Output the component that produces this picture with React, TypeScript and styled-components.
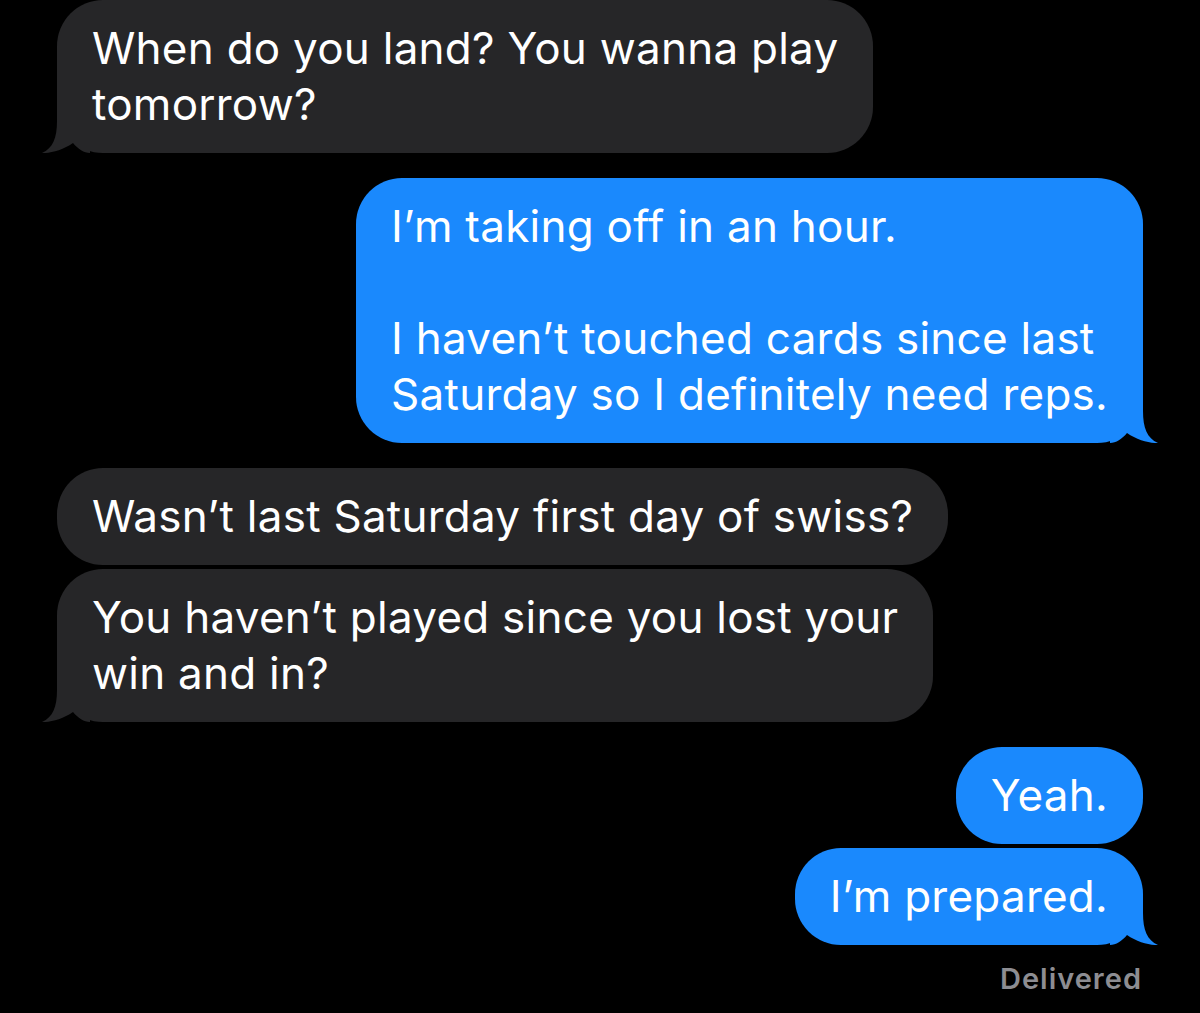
import React from 'react';
import styled, { createGlobalStyle } from 'styled-components';

type Message = {
  id: number;
  text: string;
  tail?: boolean;
};

type Group = {
  id: number;
  mine: boolean;
  messages: Message[];
  status?: string;
};

const groups: Group[] = [
  {
    id: 1,
    mine: false,
    messages: [{ id: 1, text: 'When do you land? You wanna play\ntomorrow?', tail: true }],
  },
  {
    id: 2,
    mine: true,
    messages: [
      {
        id: 2,
        text: 'I’m taking off in an hour.\n\nI haven’t touched cards since last\nSaturday so I definitely need reps.',
        tail: true,
      },
    ],
  },
  {
    id: 3,
    mine: false,
    messages: [
      { id: 3, text: 'Wasn’t last Saturday first day of swiss?' },
      { id: 4, text: 'You haven’t played since you lost your\nwin and in?', tail: true },
    ],
  },
  {
    id: 4,
    mine: true,
    messages: [
      { id: 5, text: 'Yeah.' },
      { id: 6, text: 'I’m prepared.', tail: true },
    ],
    status: 'Delivered',
  },
];

const GlobalStyle = createGlobalStyle`
  html, body {
    margin: 0;
    padding: 0;
    background: #000;
  }
  body {
    font-family: Inter, "Noto Sans", "Liberation Sans", sans-serif;
    -webkit-font-smoothing: antialiased;
  }
`;

const Thread = styled.div`
  display: flex;
  flex-direction: column;
  gap: 25px;
  padding: 0 57px;
  min-height: 1013px;
  box-sizing: border-box;
  background: #000;
`;

const GroupBox = styled.div<{ $mine: boolean }>`
  display: flex;
  flex-direction: column;
  gap: 4px;
  align-items: ${(p) => (p.$mine ? 'flex-end' : 'flex-start')};
`;

const Bubble = styled.div<{ $mine: boolean }>`
  position: relative;
  padding: 20px 35px 21px;
  border-radius: 46px;
  background: ${(p) => (p.$mine ? '#1a89fd' : '#262628')};
  color: #fff;
  font-size: 44px;
  line-height: 56px;
  letter-spacing: 0.25px;
  white-space: pre-line;
  max-width: 920px;
`;

const TailSvg = styled.svg<{ $mine: boolean }>`
  position: absolute;
  bottom: 0;
  width: 48px;
  height: 48px;
  ${(p) => (p.$mine ? 'right: -15px;' : 'left: -15px; transform: scaleX(-1);')}
`;

const Status = styled.div`
  margin-top: 14px;
  margin-right: 1px;
  font-size: 29px;
  line-height: 32px;
  font-weight: 600;
  color: #8d8d92;
  letter-spacing: 1px;
`;

const Tail: React.FC<{ mine: boolean }> = ({ mine }) => (
  <TailSvg $mine={mine} viewBox='0 0 48 48'>
    <path
      d='M0 0 H33 V16 C33 33 37 43 48 48 C40 48.5 27 45 17 38 C12 44 6 48 0 48 Z'
      fill={mine ? '#1a89fd' : '#262628'}
    />
  </TailSvg>
);

export default function App() {
  return (
    <>
      <GlobalStyle />
      <Thread>
        {groups.map((group) => (
          <GroupBox key={group.id} $mine={group.mine}>
            {group.messages.map((msg) => (
              <Bubble key={msg.id} $mine={group.mine}>
                {msg.text}
                {msg.tail && <Tail mine={group.mine} />}
              </Bubble>
            ))}
            {group.status && <Status>{group.status}</Status>}
          </GroupBox>
        ))}
      </Thread>
    </>
  );
}
